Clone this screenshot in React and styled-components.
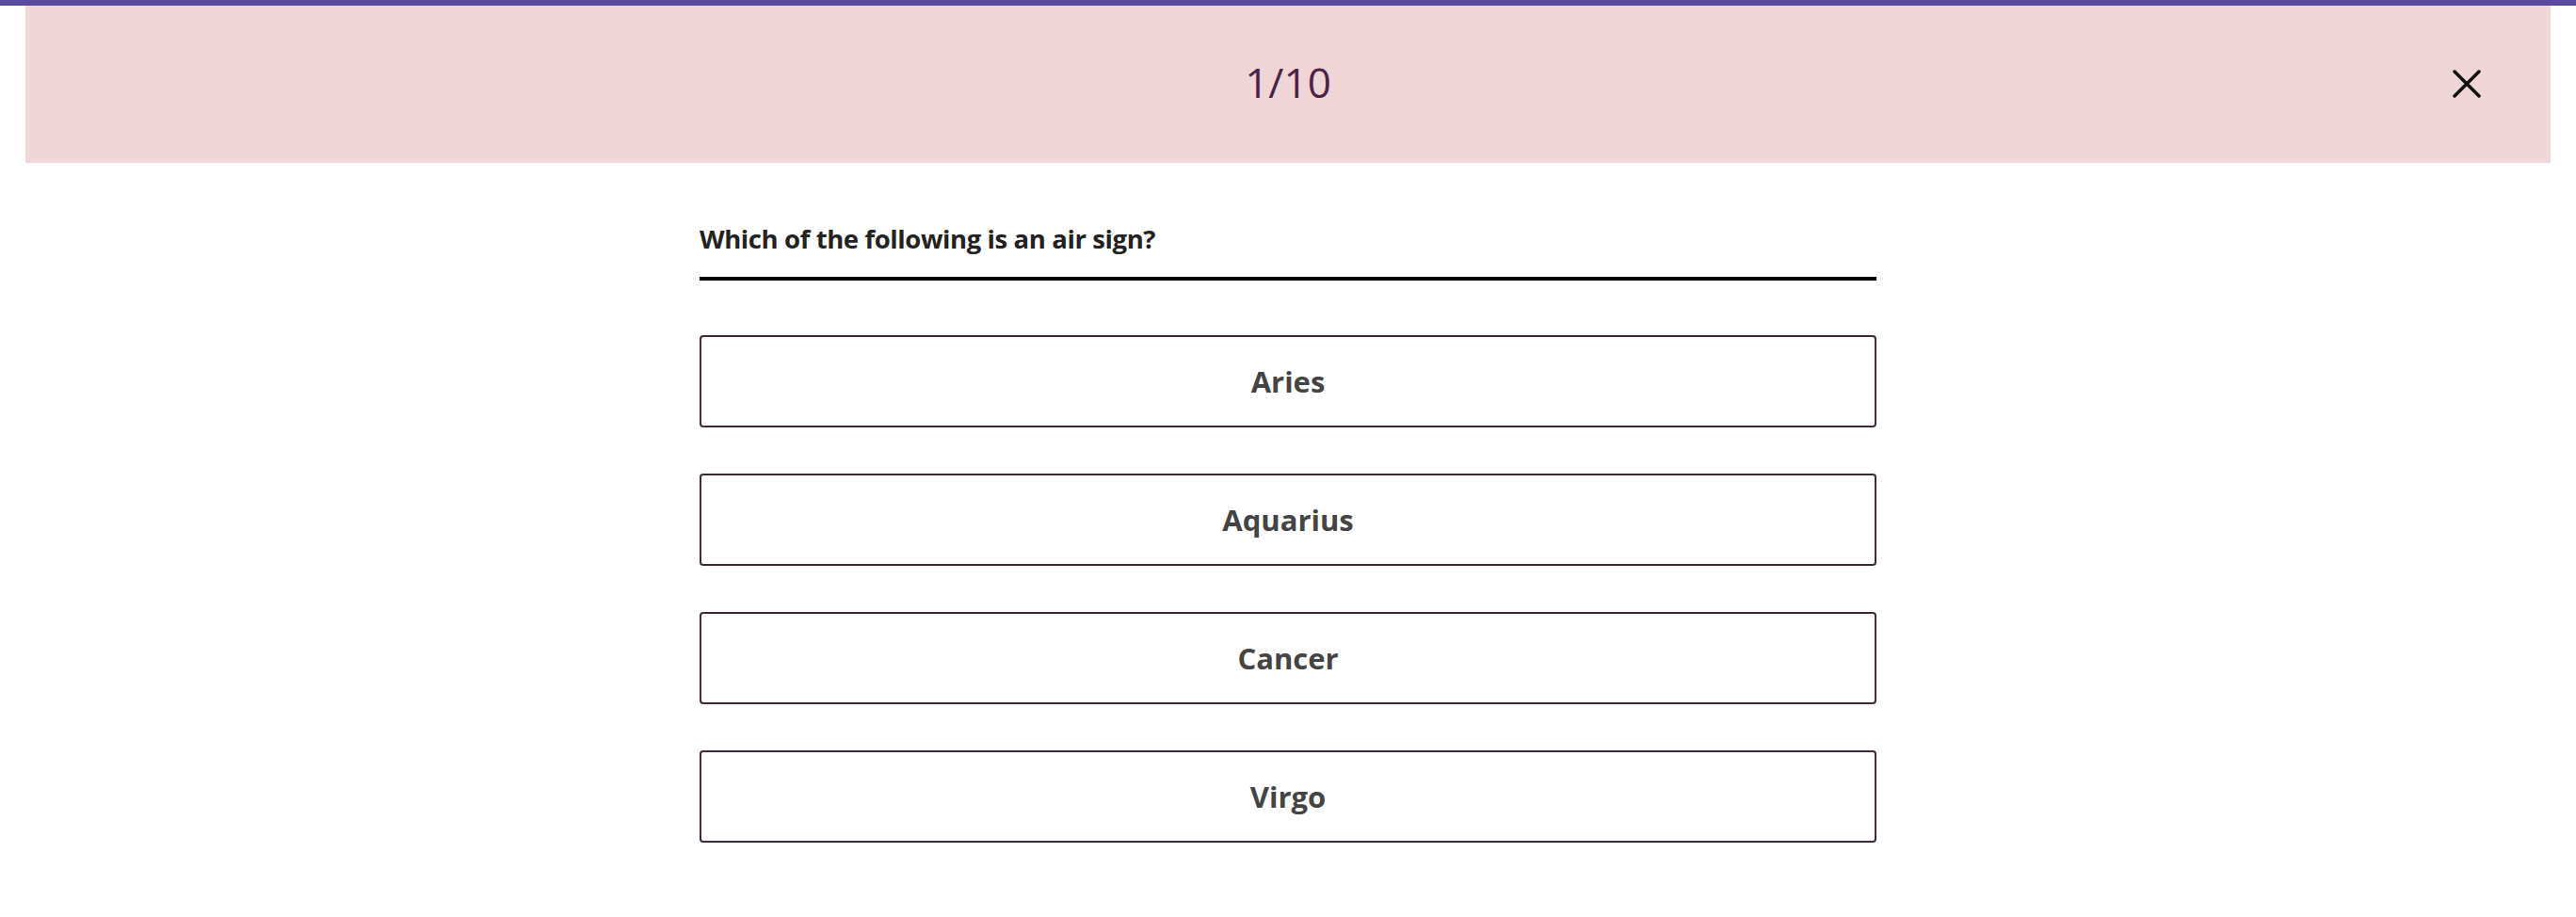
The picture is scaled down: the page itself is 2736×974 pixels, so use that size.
import React from "react";
import styled, { createGlobalStyle } from "styled-components";

const GlobalStyle = createGlobalStyle`
  html, body {
    margin: 0;
    padding: 0;
    background: #ffffff;
    font-family: "Open Sans", "Noto Sans", sans-serif;
  }
`;

const Page = styled.div`
  display: flex;
  flex-direction: column;
  min-height: 974px;
  border-top: 6px solid #5a4a9f;
`;

const Header = styled.header`
  display: grid;
  grid-template-columns: 1fr auto 1fr;
  align-items: center;
  height: 167px;
  margin: 0 27px;
  background: #f0d5d6;
`;

const Counter = styled.div`
  grid-column: 2;
  font-family: "Open Sans", sans-serif;
  font-weight: 400;
  font-size: 44px;
  color: #4b2345;
  letter-spacing: 0;
  margin-top: -5px;
`;

const CloseButton = styled.button`
  grid-column: 3;
  justify-self: end;
  margin-right: 72px;
  width: 34px;
  height: 34px;
  padding: 0;
  border: none;
  background: transparent;
  display: flex;
  align-items: center;
  justify-content: center;
  cursor: pointer;
  margin-top: -2px;
`;

const Main = styled.main`
  width: 1250px;
  margin: 0 auto;
  display: flex;
  flex-direction: column;
`;

const Question = styled.h2`
  margin: 61px 0 0;
  padding-bottom: 20px;
  border-bottom: 4px solid #000;
  font-family: "Open Sans", sans-serif;
  font-weight: 700;
  font-size: 27.5px;
  line-height: 40px;
  color: #222;
  letter-spacing: -0.4px;
`;

const Options = styled.div`
  display: flex;
  flex-direction: column;
  gap: 49px;
  margin-top: 58px;
`;

const Option = styled.button`
  height: 98px;
  width: 100%;
  box-sizing: border-box;
  background: #fff;
  border: 2px solid #3e2a3b;
  border-radius: 4px;
  font-family: "Open Sans", sans-serif;
  font-weight: 700;
  font-size: 31px;
  color: #444;
  cursor: pointer;
  padding: 0;
`;

const answers = ["Aries", "Aquarius", "Cancer", "Virgo"];

export default function App() {
  return (
    <>
      <GlobalStyle />
      <Page>
        <Header>
          <Counter>1/10</Counter>
          <CloseButton aria-label="Close">
            <svg width="30" height="30" viewBox="0 0 30 30">
              <path
                d="M2 2 L28 28 M28 2 L2 28"
                stroke="#111"
                strokeWidth="3.5"
                strokeLinecap="round"
              />
            </svg>
          </CloseButton>
        </Header>
        <Main>
          <Question>Which of the following is an air sign?</Question>
          <Options>
            {answers.map((a) => (
              <Option key={a}>{a}</Option>
            ))}
          </Options>
        </Main>
      </Page>
    </>
  );
}
